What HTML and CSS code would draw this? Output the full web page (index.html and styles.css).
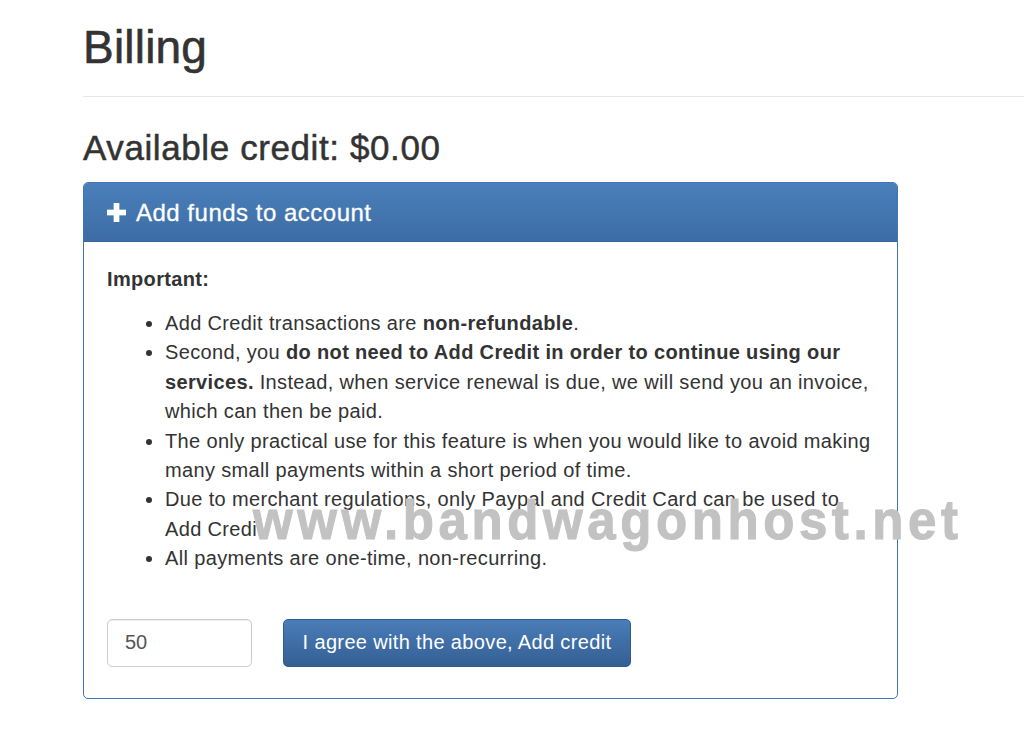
FILE: index.html
```html
<!DOCTYPE html>
<html lang="en">
<head>
<meta charset="utf-8">
<title>Billing</title>
<link rel="stylesheet" href="styles.css">
</head>
<body>
<main class="page">
  <h1 class="page-title">Billing</h1>
  <hr class="divider">
  <h2 class="credit-title">Available credit: $0.00</h2>
  <section class="panel">
    <div class="panel-heading">
      <svg class="plus-icon" width="20" height="20" viewBox="0 0 20 20" aria-hidden="true">
        <rect x="7" y="0" width="6" height="20" fill="#fff"/>
        <rect x="0" y="7" width="20" height="6" fill="#fff"/>
      </svg>
      <span>Add funds to account</span>
    </div>
    <div class="panel-body">
      <p class="important"><strong>Important:</strong></p>
      <ul class="notes">
        <li>Add Credit transactions are <strong>non-refundable</strong>.</li>
        <li>Second, you <strong>do not need to Add Credit in order to continue using our services.</strong> Instead, when service renewal is due, we will send you an invoice, which can then be paid.</li>
        <li>The only practical use for this feature is when you would like to avoid making many small payments within a short period of time.</li>
        <li>Due to merchant regulations, only Paypal and Credit Card can be used to Add Credit.</li>
        <li>All payments are one-time, non-recurring.</li>
      </ul>
      <form class="add-form">
        <input class="amount" type="text" value="50">
        <button class="btn-primary" type="button">I agree with the above, Add credit</button>
      </form>
    </div>
  </section>
  <div class="watermark">www.bandwagonhost.net</div>
</main>
</body>
</html>
```
FILE: styles.css
```css
html, body {
  margin: 0;
  padding: 0;
  background: #fff;
}

body {
  font-family: "Liberation Sans", Arial, Helvetica, sans-serif;
  color: #333;
  overflow: hidden;
}

.page {
  position: relative;
  padding: 22px 0 0 83px;
  height: 708px;
}

.page-title {
  margin: 0;
  font-size: 46px;
  line-height: 50px;
  font-weight: 400;
  color: #333;
  -webkit-text-stroke: 0.6px #333;
  letter-spacing: 0.2px;
}

.divider {
  margin: 24px 0 0 0;
  border: 0;
  border-top: 1px solid #e8e8e8;
  height: 0;
}

.credit-title {
  margin: 31px 0 0 0;
  font-size: 35px;
  line-height: 40px;
  font-weight: 400;
  color: #333;
  -webkit-text-stroke: 0.5px #333;
  letter-spacing: 0.6px;
}

.panel {
  margin-top: 14px;
  width: 815px;
  box-sizing: border-box;
  border: 1px solid #3f77b6;
  border-radius: 5px;
  overflow: hidden;
}

.panel-heading {
  display: flex;
  align-items: center;
  gap: 10px;
  padding: 15px 23px 14px 23px;
  background: linear-gradient(#4a7fba, #3e6ca4);
  border-bottom: 1px solid #3a67a0;
  color: #fff;
  font-size: 24px;
  line-height: 29px;
  letter-spacing: 0.5px;
  -webkit-text-stroke: 0.3px #fff;
}

.plus-icon {
  width: 19px;
  height: 19px;
  flex: none;
}

.panel-body {
  padding: 23px 23px 31px 23px;
  font-size: 20px;
  line-height: 29.4px;
  letter-spacing: 0.35px;
}

.important {
  margin: 0 0 14.5px 0;
}

.notes {
  margin: 0 0 45px 0;
  padding-left: 58px;
}

.add-form {
  display: flex;
  align-items: center;
  gap: 31px;
  margin: 0;
}

.amount {
  width: 145px;
  height: 48px;
  box-sizing: border-box;
  border: 1px solid #ccc;
  border-radius: 5px;
  padding: 0 17px;
  font-family: "Liberation Sans", Arial, sans-serif;
  font-size: 20px;
  color: #555;
  box-shadow: inset 0 1px 1px rgba(0, 0, 0, 0.075);
  outline: none;
}

.btn-primary {
  width: 348px;
  height: 48px;
  box-sizing: border-box;
  border: 1px solid #2f5c90;
  border-radius: 5px;
  background: linear-gradient(#4b7db8, #345f93);
  color: #fff;
  font-family: "Liberation Sans", Arial, sans-serif;
  font-size: 20px;
  letter-spacing: 0.35px;
  padding: 0;
  cursor: pointer;
}

.watermark {
  position: absolute;
  left: 253px;
  top: 496px;
  font-size: 51px;
  line-height: 51px;
  font-weight: 700;
  letter-spacing: 4.6px;
  color: #c2c2c2;
  -webkit-text-stroke: 1px #c2c2c2;
  white-space: nowrap;
  pointer-events: none;
  transform: scaleY(1.1);
  transform-origin: 0 44px;
}
```
